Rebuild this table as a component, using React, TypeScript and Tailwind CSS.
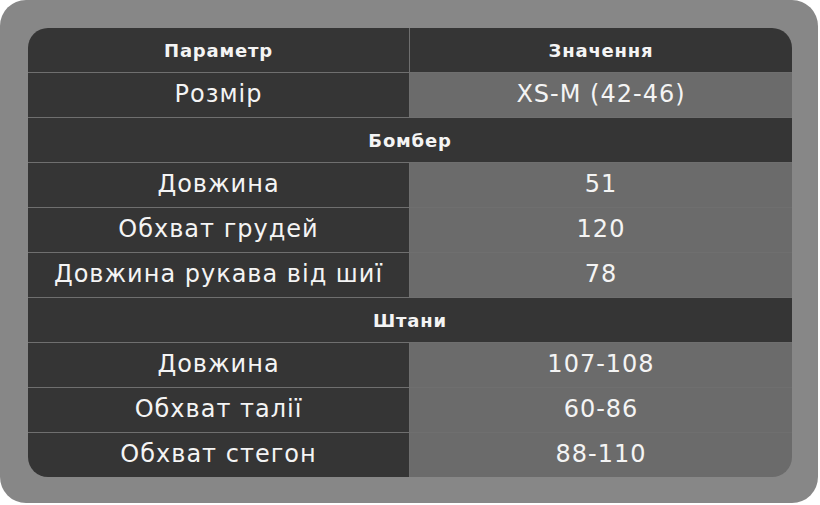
import React from "react";

type Row =
  | { kind: "head"; left: string; right: string }
  | { kind: "data"; left: string; right: string }
  | { kind: "section"; title: string };

const rows: Row[] = [
  { kind: "head", left: "Параметр", right: "Значення" },
  { kind: "data", left: "Розмір", right: "XS-M (42-46)" },
  { kind: "section", title: "Бомбер" },
  { kind: "data", left: "Довжина", right: "51" },
  { kind: "data", left: "Обхват грудей", right: "120" },
  { kind: "data", left: "Довжина рукава від шиї", right: "78" },
  { kind: "section", title: "Штани" },
  { kind: "data", left: "Довжина", right: "107-108" },
  { kind: "data", left: "Обхват талії", right: "60-86" },
  { kind: "data", left: "Обхват стегон", right: "88-110" },
];

const headText = "text-[18px] font-bold tracking-[0.8px]";
const dataText = "text-[24px] tracking-[1px] pb-[3px]";

const SizeRow = ({ row, first }: { row: Row; first: boolean }) => {
  const line = first ? "" : "border-t border-[#6f6f6f]";
  if (row.kind === "section") {
    return (
      <div className={`flex h-[45px] items-center justify-center bg-[#353535] ${headText} ${line}`}>
        {row.title}
      </div>
    );
  }
  const head = row.kind === "head";
  return (
    <div className={`flex ${first ? "h-[44px]" : "h-[45px]"} ${line}`}>
      <div
        className={`flex w-[382px] items-center justify-center border-r border-[#6f6f6f] bg-[#353535] ${
          head ? headText : dataText
        }`}
      >
        {row.left}
      </div>
      <div
        className={`flex flex-1 items-center justify-center ${
          head ? `bg-[#353535] ${headText}` : `bg-[#6b6b6b] ${dataText}`
        }`}
      >
        {row.right}
      </div>
    </div>
  );
};

export default function App() {
  return (
    <div className="h-[505px] w-[820px] bg-white">
      <div className="h-[503px] w-[818px] rounded-[26px] bg-[#878787] p-[28px] pr-[26px]">
        <div className="overflow-hidden rounded-[20px] font-['DejaVu_Sans',sans-serif] text-[#f4f4f4]">
          {rows.map((r, i) => (
            <SizeRow key={i} row={r} first={i === 0} />
          ))}
        </div>
      </div>
    </div>
  );
}
